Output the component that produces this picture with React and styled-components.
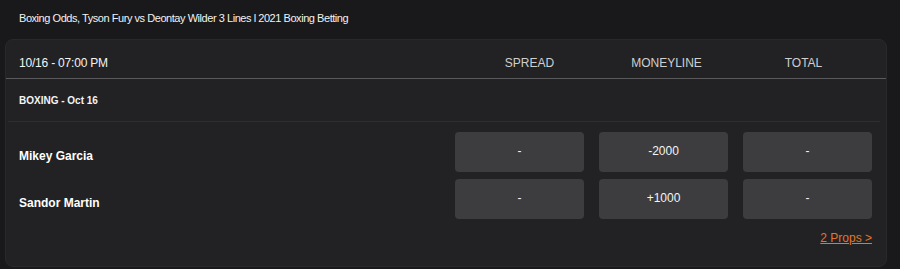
import React from 'react';
import styled, { createGlobalStyle } from 'styled-components';

const GlobalStyle = createGlobalStyle`
  body {
    margin: 0;
    background: #19191b;
    font-family: "Liberation Sans", Arial, sans-serif;
    color: #fff;
  }
`;

const Page = styled.div`
  width: 900px;
  height: 269px;
  overflow: hidden;
`;

const Title = styled.h1`
  margin: 0;
  padding: 11px 19px 0;
  height: 28px;
  box-sizing: border-box;

  font-size: 11px;
  font-weight: normal;
  line-height: 14px;
  letter-spacing: -0.45px;
  color: #f2f2f2;
`;

const Card = styled.div`
  margin: 11px 0 0 5px;
  width: 882px;
  height: 228px;
  box-sizing: border-box;

  display: flex;
  flex-direction: column;

  background: #222224;
  border: 1px solid #29292b;
  border-radius: 8px;
`;

const HeaderRow = styled.div`
  height: 31px;
  padding: 7px 14px 0 13px;

  display: flex;
  align-items: center;
  justify-content: space-between;

  border-bottom: 1px solid #5a5a5c;
`;

const DateText = styled.div`
  font-size: 12px;
  letter-spacing: -0.2px;
  color: #f4f4f4;
`;

const Columns = styled.div`
  display: grid;
  grid-template-columns: repeat(3, 137px);
`;

const ColumnLabel = styled.div`
  text-align: center;
  font-size: 12px;
  color: #cfcfcf;
`;

const LeagueRow = styled.div`
  height: 42px;
  margin: 0 6px 0 2px;
  padding-left: 11px;

  display: flex;
  align-items: center;

  border-bottom: 1px solid #2e2e30;

  font-size: 10px;
  font-weight: bold;
  color: #f4f4f4;
`;

const Lines = styled.div`
  padding: 10px 14px 0 13px;

  display: flex;
  flex-direction: column;
  gap: 7px;
`;

const Competitor = styled.div`
  display: flex;
  align-items: center;
  justify-content: space-between;
`;

const Name = styled.div`
  padding-top: 8px;

  font-size: 12px;
  font-weight: bold;
  color: #fff;
`;

const Odds = styled.div`
  display: grid;
  grid-template-columns: repeat(3, 129px);
  gap: 15px;
`;

const OddButton = styled.div`
  height: 40px;
  padding-bottom: 2px;
  box-sizing: border-box;

  display: flex;
  align-items: center;
  justify-content: center;

  background: #3d3d3f;
  border-radius: 4px;

  font-size: 12px;
  color: #f4f4f4;
`;

const Footer = styled.div`
  padding: 12px 14px 0;

  display: flex;
  justify-content: flex-end;
`;

const PropsLink = styled.a`
  font-size: 12px;
  color: #e3762a;
  text-decoration: underline;
  cursor: pointer;
`;

const competitors = [
  { name: 'Mikey Garcia', odds: ['-', '-2000', '-'] },
  { name: 'Sandor Martin', odds: ['-', '+1000', '-'] },
];

export default function App() {
  return (
    <Page>
      <GlobalStyle />
      <Title>Boxing Odds, Tyson Fury vs Deontay Wilder 3 Lines l 2021 Boxing Betting</Title>
      <Card>
        <HeaderRow>
          <DateText>10/16 - 07:00 PM</DateText>
          <Columns>
            <ColumnLabel>SPREAD</ColumnLabel>
            <ColumnLabel>MONEYLINE</ColumnLabel>
            <ColumnLabel>TOTAL</ColumnLabel>
          </Columns>
        </HeaderRow>
        <LeagueRow>BOXING - Oct 16</LeagueRow>
        <Lines>
          {competitors.map(c => (
            <Competitor key={c.name}>
              <Name>{c.name}</Name>
              <Odds>
                {c.odds.map((o, i) => (
                  <OddButton key={i}>{o}</OddButton>
                ))}
              </Odds>
            </Competitor>
          ))}
        </Lines>
        <Footer>
          <PropsLink>2 Props &gt;</PropsLink>
        </Footer>
      </Card>
    </Page>
  );
}
